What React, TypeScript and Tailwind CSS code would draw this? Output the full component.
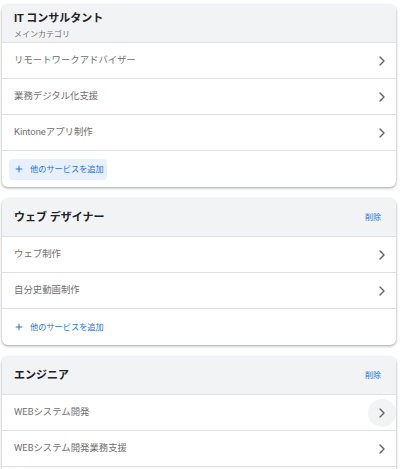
import { ChevronRight, Plus } from 'lucide-react'

interface Category {
  title: string
  sub?: string
  removable: boolean
  services: string[]
  addFilled?: boolean
  hoverIndex?: number
}

const categories: Category[] = [
  {
    title: 'IT コンサルタント',
    sub: 'メインカテゴリ',
    removable: false,
    services: ['リモートワークアドバイザー', '業務デジタル化支援', 'Kintoneアプリ制作'],
    addFilled: true,
  },
  {
    title: 'ウェブ デザイナー',
    removable: true,
    services: ['ウェブ制作', '自分史動画制作'],
  },
  {
    title: 'エンジニア',
    removable: true,
    services: ['WEBシステム開発', 'WEBシステム開発業務支援'],
    hoverIndex: 0,
  },
]

function CategoryCard({ cat }: { cat: Category }) {
  return (
    <div className="rounded-md bg-white shadow-[0_1px_2px_rgba(60,64,67,0.3),0_1px_3px_1px_rgba(60,64,67,0.15)] overflow-hidden">
      {/* Header */}
      <div
        className={
          cat.sub
            ? 'flex h-[38px] items-center justify-between bg-[#f1f3f4] border-b border-[#e0e0e0] pl-3 pr-[15px] pt-[4px]'
            : 'flex h-[38px] items-center justify-between bg-[#f1f3f4] border-b border-[#e0e0e0] pl-3 pr-[15px]'
        }
      >
        <div className="flex flex-col">
          <span className="text-[11px] font-bold leading-[14px] text-[#202124]">{cat.title}</span>
          {cat.sub && <span className="mt-[3px] text-[8px] leading-[11px] text-[#70757a]">{cat.sub}</span>}
        </div>
        {cat.removable && <span className="text-[8px] text-[#1a73e8]">削除</span>}
      </div>

      {cat.services.map((s, i) => (
        <div key={s} className="flex h-[36px] items-center justify-between border-b border-[#e0e0e0] pl-3">
          <span className="text-[9.4px] text-[#6f6f6f]">{s}</span>
          <span
            className={
              i === cat.hoverIndex
                ? 'flex h-[28px] w-[28px] items-center justify-center rounded-full bg-[#f1f3f4]'
                : 'flex h-[28px] w-[28px] items-center justify-center'
            }
          >
            <ChevronRight size={16} strokeWidth={2} className="text-[#5f6368]" />
          </span>
        </div>
      ))}

      {/* Add service */}
      <div className="flex h-[36px] items-center px-[7px]">
        <span
          className={
            cat.addFilled
              ? 'flex h-[21px] w-[98px] items-center gap-[6px] rounded bg-[#e8f0fe] pl-[5px]'
              : 'flex h-[21px] items-center gap-[6px] pl-[5px]'
          }
        >
          <Plus size={10} strokeWidth={2.4} className="text-[#1a73e8]" />
          <span className="text-[8.2px] text-[#1a73e8]">他のサービスを追加</span>
        </span>
      </div>
    </div>
  )
}

export default function App() {
  return (
    <div
      className="min-h-screen bg-white pl-[2px] pr-[4px] pt-[5px] pb-4 flex flex-col gap-[12px]"
      style={{ fontFamily: "Roboto, 'Noto Sans CJK JP', sans-serif" }}
    >
      {categories.map((c) => (
        <CategoryCard key={c.title} cat={c} />
      ))}
    </div>
  )
}
